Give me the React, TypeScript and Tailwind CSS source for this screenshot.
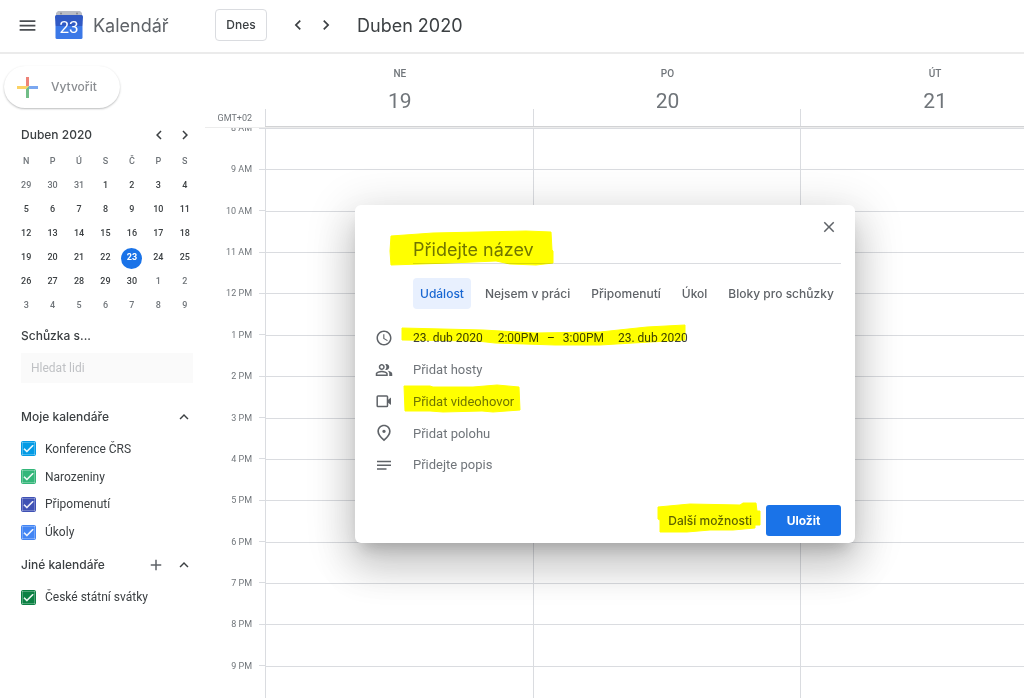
import React from "react";
import {
  MdAccessTime,
  MdAdd,
  MdCheck,
  MdChevronLeft,
  MdChevronRight,
  MdClose,
  MdExpandLess,
  MdMenu,
  MdOutlinePeopleAlt,
  MdOutlinePlace,
} from "react-icons/md";

const weekdays = ["N", "P", "Ú", "S", "Č", "P", "S"];

const weeks = [
  [29, 30, 31, 1, 2, 3, 4],
  [5, 6, 7, 8, 9, 10, 11],
  [12, 13, 14, 15, 16, 17, 18],
  [19, 20, 21, 22, 23, 24, 25],
  [26, 27, 28, 29, 30, 1, 2],
  [3, 4, 5, 6, 7, 8, 9],
];

const hours = [
  "8 AM", "9 AM", "10 AM", "11 AM", "12 PM", "1 PM", "2 PM",
  "3 PM", "4 PM", "5 PM", "6 PM", "7 PM", "8 PM", "9 PM",
];

const days = [
  { name: "NE", date: 19 },
  { name: "PO", date: 20 },
  { name: "ÚT", date: 21 },
];

const myCalendars = [
  { name: "Konference ČRS", color: "bg-[#039be5]" },
  { name: "Narozeniny", color: "bg-[#33b679]" },
  { name: "Připomenutí", color: "bg-[#3f51b5]" },
  { name: "Úkoly", color: "bg-[#4285f4]" },
];

function Logo() {
  return (
    <svg viewBox="0 0 28 29" className="h-[29px] w-7" aria-hidden="true">
      <path d="M3 0h22l2 2v5H1V2z" fill="#b9bcc4" />
      <circle cx="6" cy="2.6" r="1" fill="#85888f" />
      <circle cx="22" cy="2.6" r="1" fill="#85888f" />
      <path d="M0 5.5Q0 4 1.500 4h25Q28 4 28 5.500L27.500 15H.5z" fill="#3059c4" />
      <path d="M.5 15h27v11.500q0 1.500-1.500 1.500H2Q.5 28 .5 26.500z" fill="#3b78e7" />
      <text
        x="14"
        y="22"
        textAnchor="middle"
        fontSize="17"
        fill="#fff"
        className="font-[Roboto,sans-serif]"
      >
        23
      </text>
    </svg>
  );
}

function TopBar() {
  return (
    <header className="flex h-[54px] shrink-0 items-center border-b-2 border-[#ebebeb] pb-0.5">
      <div className="flex w-[215px] items-center pl-[17px]">
        <button aria-label="Hlavní nabídka" className="text-[#4a4d51]">
          <MdMenu size={21} />
        </button>
        <div className="ml-[17px]">
          <Logo />
        </div>
        <span className="ml-2.5 text-[18px] text-[#5f6368]">Kalendář</span>
      </div>
      <button className="h-8 w-[52px] rounded border border-[#dadce0] text-[12px] font-medium text-[#3c4043]">
        Dnes
      </button>
      <button aria-label="Předchozí" className="ml-[21px] text-[#3c4043]">
        <MdChevronLeft size={20} />
      </button>
      <button aria-label="Další" className="ml-2 text-[#3c4043]">
        <MdChevronRight size={20} />
      </button>
      <h1 className="ml-[21px] text-[18px] text-[#3c4043]">Duben 2020</h1>
    </header>
  );
}

function MiniCalendar() {
  return (
    <section className="mt-[17px]">
      <div className="flex h-5 items-center pl-[21px] text-[#3c4043]">
        <h2 className="flex-1 text-[12px] font-medium">Duben 2020</h2>
        <button aria-label="Předchozí měsíc">
          <MdChevronLeft size={18} />
        </button>
        <button aria-label="Další měsíc" className="mr-[11px] ml-2">
          <MdChevronRight size={18} />
        </button>
      </div>
      <table className="mt-[5px] ml-[13px] w-[185px] table-fixed border-collapse text-center font-[Roboto,sans-serif] text-[9px] font-medium text-[#3c4043]">
        <thead>
          <tr className="h-6 text-[#70757a]">
            {weekdays.map((d, i) => (
              <th key={i} className="p-0 font-medium">
                {d}
              </th>
            ))}
          </tr>
        </thead>
        <tbody>
          {weeks.map((week, w) => (
            <tr key={w} className="h-6">
              {week.map((day, i) => {
                const outside = (w === 0 && day > 20) || (w > 3 && day < 10);
                const today = day === 23;
                return (
                  <td key={i} className={outside ? "p-0 text-[#70757a]" : "p-0"}>
                    <span
                      className={
                        today
                          ? "mx-auto flex size-[21px] items-center justify-center rounded-full bg-[#1a73e8] font-bold text-white"
                          : "mx-auto flex size-[21px] items-center justify-center"
                      }
                    >
                      {day}
                    </span>
                  </td>
                );
              })}
            </tr>
          ))}
        </tbody>
      </table>
    </section>
  );
}

function CalendarCheck({ name, color }: { name: string; color: string }) {
  return (
    <label className="flex items-center gap-[9px] font-[Roboto,sans-serif] text-[12px] text-[#3c4043]">
      <span className="grid size-[15px] place-items-center">
        <input
          type="checkbox"
          defaultChecked
          className={`col-start-1 row-start-1 size-[15px] appearance-none rounded-xs ${color}`}
        />
        <MdCheck
          size={13}
          strokeWidth={1}
          className="pointer-events-none col-start-1 row-start-1 text-white"
        />
      </span>
      {name}
    </label>
  );
}

function Sidebar() {
  return (
    <aside className="w-[205px] shrink-0 pt-3">
      <button className="ml-1 flex h-[42px] w-[116px] items-center gap-[13px] rounded-full pl-[13px] text-[12px] font-medium text-[#8a8d91] shadow-[0_1px_2px_rgba(60,64,67,0.35)]">
        <svg viewBox="0 0 21 21" className="size-[21px]" aria-hidden="true">
          <path d="M9 0h3v9H9z" fill="#ee8277" />
          <path d="M0 9h12l-3 3H0z" fill="#fbd265" />
          <path d="M9 12l3-3v12H9z" fill="#71bd87" />
          <path d="M12 9h9v3h-9z" fill="#7ba7f0" />
        </svg>
        Vytvořit
      </button>
      <MiniCalendar />
      <section className="mt-2 ml-[21px] w-[172px]">
        <label htmlFor="people" className="block text-[12px] leading-5 font-medium text-[#3c4043]">
          Schůzka s...
        </label>
        <input
          id="people"
          placeholder="Hledat lidi"
          className="mt-[7px] h-[30px] w-full bg-[#fafafa] px-2.5 font-[Roboto,sans-serif] text-[12px] placeholder:text-[#bfc1c4]"
        />
        <div className="mt-6 flex h-5 items-center justify-between text-[#3c4043]">
          <h2 className="text-[12px] font-medium">Moje kalendáře</h2>
          <button aria-label="Sbalit moje kalendáře">
            <MdExpandLess size={18} />
          </button>
        </div>
        <div className="mt-2 grid h-[111px] auto-rows-fr">
          {myCalendars.map((c) => (
            <CalendarCheck key={c.name} {...c} />
          ))}
        </div>
        <div className="mt-[9px] flex h-5 items-center text-[#3c4043]">
          <h2 className="flex-1 text-[12px] font-medium">Jiné kalendáře</h2>
          <button aria-label="Přidat další kalendáře" className="text-[#5f6368]">
            <MdAdd size={18} />
          </button>
          <button aria-label="Sbalit jiné kalendáře" className="ml-2.5">
            <MdExpandLess size={18} />
          </button>
        </div>
        <div className="mt-2 grid h-7">
          <CalendarCheck name="České státní svátky" color="bg-[#0b8043]" />
        </div>
      </section>
    </aside>
  );
}

function WeekGrid() {
  return (
    <main className="min-w-0 flex-1 overflow-hidden">
      <div className="flex h-full w-[calc(100%+44px)] flex-col">
        <div className="flex h-[73px] shrink-0 font-[Roboto,sans-serif]">
          <div className="flex w-[60px] items-end justify-end pr-[13px] text-[9px] leading-[18px] text-[#70757a]">
            GMT+02
          </div>
          <div className="grid flex-1 grid-cols-3 border-b border-[#d2d3d5]">
            {days.map((d) => (
              <div key={d.name} className="flex flex-col">
                <div className="flex h-[55px] flex-col items-center pt-3 pl-0.5 text-[#70757a]">
                  <span className="text-[10px] leading-4 font-medium">{d.name}</span>
                  <span className="mt-[5px] text-[21px] leading-7">{d.date}</span>
                </div>
                <div className="flex-1 border-l border-[#dadce0]" />
              </div>
            ))}
          </div>
        </div>
        <div className="flex min-h-0 flex-1 items-start overflow-hidden border-t border-[#ececec]">
          <div className="grid h-[579px] w-[60px] shrink-0 auto-rows-fr font-[Roboto,sans-serif] text-[9px] leading-3 text-[#70757a]">
            {hours.map((h) => (
              <div key={h} className="-mt-1.5 flex h-3 items-center justify-end gap-[7px]">
                {h}
                <span className="h-px w-1.5 bg-[#dadce0]" />
              </div>
            ))}
          </div>
          <div className="grid h-[579px] flex-1 auto-rows-fr">
            {hours.map((h) => (
              <div key={h} className="grid grid-cols-3 border-t border-[#dadce0]">
                {days.map((d) => (
                  <div key={d.name} className="border-l border-[#dadce0]" />
                ))}
              </div>
            ))}
          </div>
        </div>
      </div>
    </main>
  );
}

function Highlights() {
  return (
    <svg
      viewBox="0 0 500 338"
      className="pointer-events-none absolute top-0 left-0 h-[338px] w-[500px] mix-blend-multiply"
      fill="#ffff00"
      stroke="#ffff00"
      strokeLinejoin="round"
      aria-hidden="true"
    >
      <path d="M36 31L78 28 171 26 196 27 197 45 198 46V58L181 60 155 59 141 56 95 58 36 60 35 46z" />
      <path d="M47 123L128 125 180 128 245 127 292 122 330 120V135L278 138 245 140 200 140 140 138 122 136 47 135z" />
      <path d="M49 181H75L78 182H118L142 180 164 182 165 205 138 207 127 206 88 207 75 206 50 206z" />
      <path d="M303 302L335 299 385 300 388 298H401L402 306H405V320H400V323L378 325 355 325 332 327H305V315L303 314z" />
    </svg>
  );
}

function VideoIcon() {
  return (
    <svg viewBox="0 0 18 18" className="size-[18px]" aria-hidden="true">
      <rect x="2.200" y="3.900" width="10.300" height="10.600" rx="0.800" fill="none" stroke="currentColor" strokeWidth="1.500" />
      <path d="M12.500 8.200L16 5.500v7.400l-3.500-2.700z" fill="currentColor" />
    </svg>
  );
}

function DescriptionIcon() {
  return (
    <svg viewBox="0 0 18 18" className="size-[18px]" aria-hidden="true">
      <path d="M2 5.500h14M2 9.200h14M2 13h9.500" stroke="currentColor" strokeWidth="1.600" />
    </svg>
  );
}

const tabs = ["Událost", "Nejsem v práci", "Připomenutí", "Úkol", "Bloky pro schůzky"];

const fields = [
  { label: "Přidat hosty", icon: <MdOutlinePeopleAlt size={18} /> },
  { label: "Přidat videohovor", icon: <VideoIcon /> },
  { label: "Přidat polohu", icon: <MdOutlinePlace size={20} /> },
  { label: "Přidejte popis", icon: <DescriptionIcon /> },
];

function EventDialog() {
  return (
    <div
      role="dialog"
      aria-label="Nová událost"
      className="absolute top-[205px] left-[355px] w-[500px] rounded-md bg-white pt-[13px] pr-3.5 pb-[7px] shadow-[0_24px_38px_3px_rgba(0,0,0,0.14),0_9px_46px_8px_rgba(0,0,0,0.12),0_11px_15px_-7px_rgba(0,0,0,0.2)]"
    >
      <div className="flex justify-end pr-[3px]">
        <button aria-label="Zavřít" className="text-[#5f6368]">
          <MdClose size={18} />
        </button>
      </div>
      <div className="ml-[58px]">
        <input
          aria-label="Název"
          placeholder="Přidejte název"
          className="block h-7 w-full border-b border-[#dadce0] text-[18px] placeholder:text-[#70757a]"
        />
        <div className="mt-[14px] flex gap-[7px] text-[12px] font-medium text-[#5f6368]">
          {tabs.map((t, i) => (
            <button
              key={t}
              className={
                i === 0
                  ? "h-[31px] rounded bg-[#e8f0fe] px-[7px] whitespace-nowrap text-[#1967d2]"
                  : "h-[31px] px-[7px] whitespace-nowrap"
              }
            >
              {t}
            </button>
          ))}
        </div>
      </div>
      <div className="mt-[13px] grid h-[159px] auto-rows-fr font-[Roboto,sans-serif] text-[13px] text-[#3c4043]">
        <div className="flex items-center text-[12px]">
          <span className="flex w-[58px] justify-center text-[#5f6368]">
            <MdAccessTime size={18} />
          </span>
          <button>23. dub 2020</button>
          <button className="ml-[15px]">2:00PM</button>
          <span className="mx-2">–</span>
          <button>3:00PM</button>
          <button className="ml-3.5">23. dub 2020</button>
        </div>
        {fields.map(({ label, icon }) => (
          <div key={label} className="flex items-center">
            <span className="flex w-[58px] justify-center text-[#5f6368]">{icon}</span>
            <input
              aria-label={label}
              placeholder={label}
              className="min-w-0 flex-1 placeholder:text-[#70757a]"
            />
          </div>
        ))}
      </div>
      <div className="mt-6 flex items-center justify-end gap-3.5 text-[12px] font-medium">
        <button className="h-[31px] text-[#5f6368]">Další možnosti</button>
        <button className="h-[31px] w-[75px] rounded-[3px] bg-[#1a73e8] font-bold text-white">
          Uložit
        </button>
      </div>
      <Highlights />
    </div>
  );
}

export default function App() {
  return (
    <div className="relative flex h-screen flex-col overflow-hidden bg-white font-[Inter,sans-serif]">
      <TopBar />
      <div className="flex min-h-0 flex-1">
        <Sidebar />
        <WeekGrid />
      </div>
      <EventDialog />
    </div>
  );
}
